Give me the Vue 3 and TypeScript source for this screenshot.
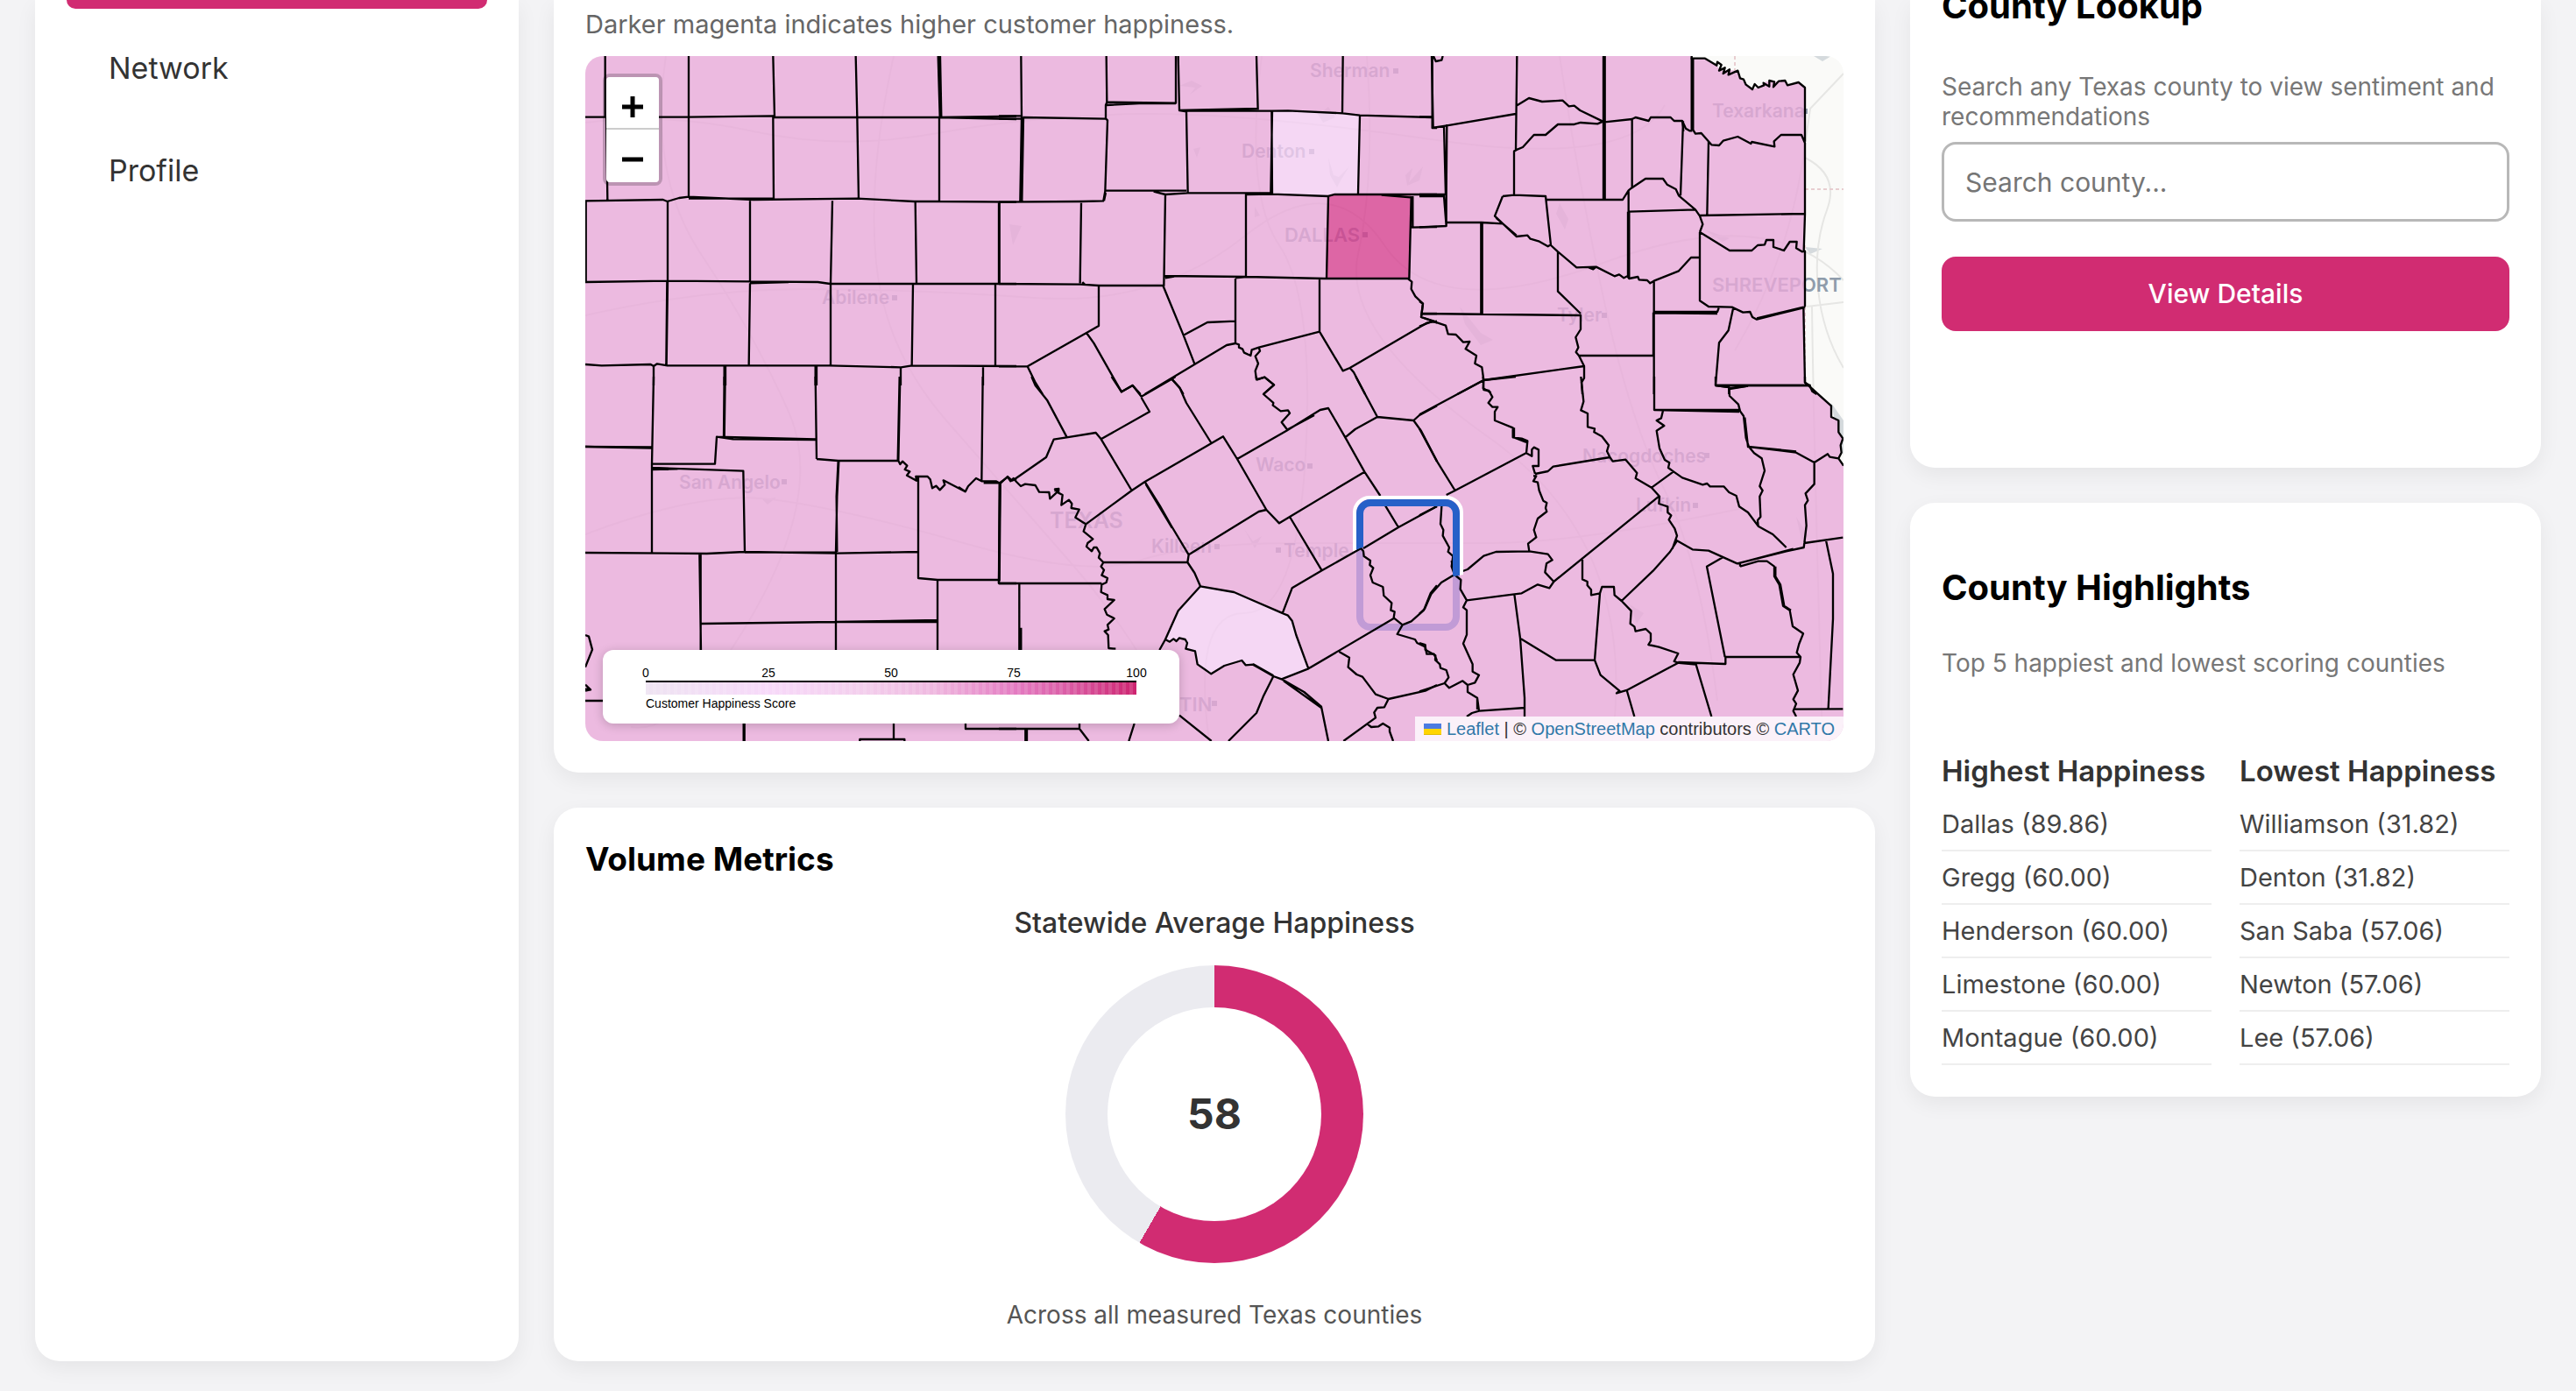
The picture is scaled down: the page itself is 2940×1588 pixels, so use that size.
<script setup lang="ts">
import { ref } from 'vue'

interface County {
  name: string
  score: string
}

interface Sheet {
  x: number
  y: number
  lines: string
}

interface Place {
  name: string
  x: number
  y: number
  size: number
  dot?: [number, number]
}

const query = ref('')
const average = 58

const highest: County[] = [
  { name: 'Dallas', score: '89.86' },
  { name: 'Gregg', score: '60.00' },
  { name: 'Henderson', score: '60.00' },
  { name: 'Limestone', score: '60.00' },
  { name: 'Montague', score: '60.00' },
]

const lowest: County[] = [
  { name: 'Williamson', score: '31.82' },
  { name: 'Denton', score: '31.82' },
  { name: 'San Saba', score: '57.06' },
  { name: 'Newton', score: '57.06' },
  { name: 'Lee', score: '57.06' },
]

const places: Place[] = [
  { name: 'Sherman', x: 1495, y: 88, size: 21, dot: [1590, 78] },
  { name: 'Texarkana', x: 1954, y: 134, size: 21, dot: [2057, 124] },
  { name: 'Denton', x: 1417, y: 180, size: 21, dot: [1494, 170] },
  { name: 'DALLAS', x: 1466, y: 276, size: 22, dot: [1555, 265] },
  { name: 'SHREVEPORT', x: 1954, y: 333, size: 22 },
  { name: 'Abilene', x: 938, y: 347, size: 21, dot: [1018, 337] },
  { name: 'Tyler', x: 1777, y: 367, size: 21, dot: [1828, 357] },
  { name: 'San Angelo', x: 775, y: 558, size: 21, dot: [892, 547] },
  { name: 'Waco', x: 1433, y: 538, size: 21, dot: [1492, 529] },
  { name: 'Nacogdoches', x: 1806, y: 528, size: 21, dot: [1945, 517] },
  { name: 'Lufkin', x: 1867, y: 584, size: 21, dot: [1932, 574] },
  { name: 'TEXAS', x: 1198, y: 603, size: 25 },
  { name: 'Killeen', x: 1314, y: 631, size: 21, dot: [1386, 621] },
  { name: 'Temple', x: 1465, y: 636, size: 21, dot: [1456, 625] },
  { name: 'AUSTIN', x: 1300, y: 812, size: 22, dot: [1383, 800] },
]

const stateShape =
  'M-2856 42H934V52H978L1018 74L1030 92L1060 90L1090 92L1098 118L1118 140L1140 156L1160 150L1185 130L1215 130L1252 126L1260 142L1298 132L1320 150V1160L1345 1182L1410 1240V1278L1435 1290V1330L1450 1352L1442 1375V1410L1435 1420L1456 1445V2388H-2856Z'
const dallas = 'M-312 522L-290 514L-30 520V524L-35 804L-318 802Z'
const denton = 'M-504 232L-450 228L-204 246L-210 512L-290 514L-312 522L-508 514Z'
const williamson =
  'M-750 1858L-635 1878L-470 1950L-450 1958L-436 1976L-422 2025L-380 2140L-472 2176L-500 2166L-570 2126L-595 2128L-608 2112L-668 2130L-713 2158L-760 2125L-768 2080L-800 2072L-802 2045L-822 2035L-840 2046L-870 2040L-826 1942Z'

const roads =
  'M668 140Q760 128 860 150T1070 152T1300 130T1640 160T1900 120M668 360Q800 330 920 330T1180 340T1420 270T1580 280T1830 300T2104 320M760 64Q740 200 800 290T900 470T860 700T720 830M1020 64Q990 200 1000 300T1080 480T1220 640T1330 800M1440 64Q1420 220 1460 280T1490 520T1420 700T1380 846M1560 64Q1570 200 1550 290T1700 500T1840 846M668 610Q800 560 880 570T1100 620T1300 640T1480 620T1700 620T1990 580M1780 64Q1800 200 1830 340T1900 560T1960 800M2060 180Q2100 200 2085 240T2075 330T2104 420M2104 84L2066 124L2058 180Q2040 300 1980 400M2062 350Q2104 345 2104 345M2080 846Q2070 500 2068 350'
const water =
  'M1360 92L1346 98L1364 100L1358 108L1372 98ZM1500 124L1510 140L1524 134L1516 122L1506 130ZM1516 180L1522 200L1528 202L1540 190L1530 206L1526 214L1518 200ZM1604 200L1612 192L1608 208L1624 190L1620 206L1606 212ZM1362 170L1370 168L1366 180ZM1152 256L1166 258L1156 280ZM1432 236L1438 246L1432 248ZM1780 232L1790 250L1786 262L1776 244ZM1666 350L1690 380L1704 388L1690 394L1672 370ZM1945 262L1974 272L1966 276ZM1420 604L1432 626L1440 612L1430 618ZM1860 690L1876 700L1868 712ZM2050 590L2064 612L2056 616ZM2060 282L2080 284L2066 290ZM2070 64H2090L2080 70ZM870 570L886 568L876 576Z'

const sheets: Sheet[] = [
  {
    x: 660,
    y: 0,
    lines:
      'M24 401H378L668 397V402H1236L1500 398M1236 402L1500 408M24 688L290 684L305 690L345 678L378 674L600 684L955 680L1150 690H1236L1500 692M378 680H668M92 192V400M96 400L100 685M378 192V676M667 192L672 400M667 400L669 680M950 192L955 402M955 402L960 684M1232 192L1238 400M1239 192L1243 400M1236 400V688M26 690V965M306 690V965M588 684V965M870 688L864 970M1154 690L1158 970M1440 692V970M24 966L306 962L588 964L820 966L862 972H1500M588 970L720 966M306 965L302 1250M588 970L584 1250M304 965L301 1250M864 972V1250M1146 972L1142 1255M1428 972V1254M24 1248L80 1252L248 1248L258 1254L270 1246L305 1252H860L1105 1258L1142 1252L1500 1254M258 1254V1320M500 1254V1320M504 1254V1320M812 1254V1320M816 1254V1320M1104 1258V1320M1386 1254V1320',
  },
  {
    x: 1140,
    y: 50,
    lines:
      'M76 42L78 250L73 540M84 252L79 540M0 247H78M0 257H78M82 252L368 257M368 42L370 200L366 210V256L372 262L364 505L358 538M368 200L606 203V42M368 210L480 204H606M614 42L618 228L642 232M616 228L885 222M882 42L887 226M642 230H936L990 229L1178 238L1236 245L1482 252M1178 42L1176 238M1482 42L1487 288H1500M642 232L647 510M936 232L931 512M934 232L936 514M1236 246L1230 512M366 503H642M366 510L360 538M530 506L570 516L646 511H930M848 516L936 515L1128 522L1150 516H1500M1310 518L1410 526M0 542L282 540L360 538M2 545V822M282 545L278 820M570 516L565 830M846 512V796M1128 522L1122 802M1412 522L1405 806M1417 522V628M1408 629L1500 627M0 822L280 824L342 828H562L632 998L670 1096M566 795L848 798L1115 804H1402M570 802L600 797M286 816L296 826M342 828V966L300 990L98 1105H0M98 1105L125 1160L150 1200M300 990L325 1025L420 1192L458 1170L485 1200M500 1200L670 1098L780 1032L810 1026L822 1030V1040L834 1045L840 1058L862 1068L866 1048L890 1040L1098 986M592 1148L618 1176L632 1200M632 998L714 954L810 950M810 804V1026M810 802L848 798M890 1040L894 1052L878 1070L888 1095L878 1120L882 1150L910 1142L942 1168L906 1200M1098 804V986L1178 1120L1202 1110L1465 956L1500 950M1202 1110L1215 1125L1254 1200M1402 806L1414 815L1412 840L1426 865L1452 890L1446 936L1490 950L1500 956M1446 924H1500',
  },
  {
    x: 1620,
    y: 50,
    lines:
      'M44 42V288L94 280L330 240M94 276L92 520V624M84 282L90 520M0 516H88M0 522H84L92 624L0 628M92 612H212L285 616M0 250H44M48 42L56 60L76 56L80 42M334 42L330 365L324 368V518M332 212L375 186L420 198L490 194L512 214L530 212L550 228L628 266M330 364L354 354L392 312H432L474 276H530L552 270L610 274L628 266M630 42V534M635 42V534M634 268L728 258L740 252L785 264L792 252H860L872 264H900L912 290L925 298H934M932 42V298M937 50V298M728 258V495M903 265L894 520M900 265L904 300M928 50H978L1018 74L1020 62L1034 72L1026 92L1046 82L1040 102L1062 88L1058 106L1090 92L1098 118L1110 122L1118 140L1140 156L1148 138L1160 150L1180 142L1178 134L1198 146L1198 126L1215 130L1212 148L1230 128L1252 126L1260 142L1298 132L1320 150V335M934 290L945 308L965 306L1000 346L1026 348L1040 332L1090 318L1135 342L1138 336L1216 352L1214 334L1238 312H1308L1320 340V585M990 335L985 586M960 588L1320 582M1320 585L1316 710M285 522L258 590L332 660L370 656L380 668L408 676L440 694L450 688M262 596L332 656M285 522L324 518L432 522L450 690M436 534H696L716 502L726 494L774 462H834L848 482L878 498L888 520L945 568L960 590L970 618L960 645M716 505V575L945 568M714 575V800M718 575V800M450 690L474 712L538 766L605 764L595 772L580 766M605 764L668 796L684 790L700 802L712 796L718 804L748 798L752 808L780 810L790 820L803 812L888 778L930 732H960M474 712V848L552 924M960 645L1062 708H1138L1158 690L1182 688L1188 672H1212V696L1248 708L1268 678H1292L1290 700L1310 712L1320 710V900M960 645V880L990 900L1070 902L1108 920L1132 918L1140 936L1155 944L1315 904L1320 900M1155 940L1315 902M803 812V1200M801 920V1066M805 918H1020L1025 905M805 922L1020 924M1075 902L1058 982L1026 1024L1014 1168M1014 1170H1336L1345 1190L1360 1200M1315 904L1320 1160L1336 1170M1060 1200V1180L1125 1172M1014 1170L1060 1176M211 612V924M215 612V924M5 924L552 930V978L535 1005L544 1040L536 1056L546 1068H803M0 882L12 890L6 936L45 950L90 965L98 994L125 996L150 1022L172 1020L158 1045L195 1068L190 1095L214 1108L220 1152L218 1180L245 1195M0 968L45 950M220 1152L130 1200M220 1152L564 1104L546 1068M564 1104V1145L555 1160L558 1200',
  },
  {
    x: 660,
    y: 430,
    lines:
      'M24 240L252 245M24 240L252 241M258 0L252 300V602M500 0L498 210M503 0L500 210M812 0L816 282M1102 0L1096 288M1100 0L1094 288M1385 0L1381 358M254 299H468L474 206L530 214L814 216M474 206L814 214M254 312L565 323L570 600M254 318L340 316M816 282L890 288L884 410L886 600M892 288L886 410L882 600M890 288H1096L1102 300L1110 290L1126 305L1118 318L1135 325L1125 338L1158 356L1156 342H1196L1205 352L1212 382L1225 374L1238 388L1255 370L1250 355L1325 394L1302 378M1325 394L1335 375L1362 348L1381 358H1430L1445 366L1470 342L1485 356L1500 350M1388 364H1440M1164 342V690L1230 696H1440M1442 366L1440 708H1500M1445 366L1442 700M24 603L440 606L570 600L886 605L1164 600M570 602H886M415 606L420 936M419 606V936M882 606V936M1230 696V936M422 846L882 840L1230 834M882 840H1230M24 885L36 890L48 935L24 995M24 1055L42 1072L24 1076M24 1070H42M24 1110H84M566 1188V1248M569 1188V1248M1080 1188V1242M964 1248V1242H1117V1248M1326 1188V1206H1500',
  },
  {
    x: 1140,
    y: 430,
    lines:
      'M112 0L125 30L165 80L232 206M386 0L420 52L458 30L488 68L592 8L605 0M488 72L516 120L350 214M592 8L620 40L642 90L726 225M50 354L162 276L188 215L232 208L332 192L350 214L455 390M298 505L455 390L500 360L768 205L816 282L916 456L960 502L996 480L1252 326M0 366L30 344L40 358L50 348L60 360L75 375L90 368L125 372L138 395L172 396L175 418L200 395L192 385L205 384L204 398L218 405L214 440L240 422L250 435L248 450L275 455L262 482L290 500L298 505L290 530L322 556L304 570L300 582L318 598L325 585H335L346 605L342 620L358 636H645M190 390H208M500 360L550 440L590 510L650 610L646 636L670 672L690 718M503 368L593 518M650 610L890 462L916 456M816 282L985 185L1100 114L1128 108L1186 208L1252 326L1306 408M985 183L1080 132M1322 440L1368 516M880 0L885 10L910 2L942 28L906 60L940 90L938 98L965 118L990 115L996 125L968 156L988 182M1222 0L1296 138L1220 180L1186 208M1296 138L1420 150L1440 132L1500 100M1420 150L1446 186L1500 290M996 480L1106 664M1248 588L1368 516L1500 444M972 808L1004 724L1106 664L1240 588L1248 598L1250 615L1272 630L1270 645L1282 655L1272 680L1280 705L1315 720L1318 750L1345 775L1342 800L1355 805L1352 826L1382 850L1364 882L1425 900L1432 912L1460 925L1465 950L1490 950L1500 972M1382 850L1412 838L1455 800L1478 742L1500 715M1060 1000L1352 828M690 718L805 738L970 810L990 818L1004 836L1018 885L1060 1000L968 1036L940 1026L870 986L845 988L832 972L772 990L727 1018L680 985L672 940L640 932L645 912L638 900L618 895L608 906L598 898L585 908L570 900L614 802ZM860 762L972 810M870 984L940 1024M550 936L570 900M358 636L350 650L360 662L352 680L372 690L368 705L352 712L350 738L372 748L372 762L395 765L362 796L370 815L395 828L372 850L376 866L362 872L374 885L376 930L400 932M0 708H352M70 708V936M76 860V936M4 366L0 708M940 1026L905 1096L882 1152L786 1248M968 1036L1045 1080L1104 1130L1128 1248M975 1042L1104 1134M1165 942L1200 962L1196 995L1225 1020L1245 1028L1290 1088L1334 1104L1460 1076L1500 1056M1334 1104L1320 1132L1296 1134L1285 1150L1290 1168L1180 1248M1262 1190L1275 1200L1300 1198L1315 1188L1338 1202V1215L1350 1248M618 1160L728 1248M464 1188L445 1248M0 1206H276V1188M276 1206L308 1248M91 1206V1248M96 1206V1248',
  },
  {
    x: 1620,
    y: 430,
    lines:
      'M0 130L220 12L330 0M218 0L220 45L238 48L250 70L236 90L250 104H268L258 120V150L320 175V208L350 212L370 220L366 262L385 272V250L392 242L408 250V306H388L396 333M324 175V208L366 225M0 178L60 290L122 390M92 405L122 390L365 262M0 475L60 444M76 444L72 505L82 525L80 545L102 585L98 600L115 615L110 650L120 678M110 630L114 655M396 333L440 324L458 308L652 276M390 340H400L390 358L405 362L410 390L424 425L436 432L432 450L436 462L405 486L392 525L400 550L372 572L376 598M120 676L165 660L220 614L262 600L376 598L440 608L455 628L435 640L430 670L460 702L820 410M460 702L445 724L405 712L350 742L325 745L162 766L140 728L142 696L120 678L75 705L40 745L18 795L0 812M162 766L150 790L162 800V884L150 914L182 985V1010L204 1022L190 1048L165 1056V1080L198 1100L204 1145L362 1134M198 1100V1140M204 1145L180 1152L162 1164M0 912L20 918V935L55 955L54 970L70 985L72 998L92 1005L100 1030L86 1050L0 1078M86 1050L102 1066L148 1042L165 1056M325 745L345 896L360 1100V1164M345 896L468 971H600L618 742M558 620V694L575 702V715L588 730V748L618 742L625 720H666L668 748L692 768L725 802L722 846L736 856L740 872L775 864L792 880V905L784 918L820 926L886 948L872 975L886 980L710 1074L675 1084L685 1076L620 1022L600 971M692 768L800 665L858 600L882 562L935 592L990 596L1088 640L1256 598L1316 585L1318 570L1450 551M1098 650V638L1280 590M710 1074L736 1164M886 978L1048 984V960H1305M880 980L947 986L1000 1164M1040 618L984 650L1046 960M1098 650L1160 632H1190L1215 650V684L1232 712L1245 785L1268 800L1278 855L1314 880L1300 915L1292 945L1305 960L1302 980L1280 1020L1296 1075L1280 1105L1290 1120L1280 1145L1290 1164M1219 650V684L1236 712L1249 785L1272 800M1284 1139L1450 1138M1392 560L1416 675V830L1400 1136M553 0L562 85L553 115L576 126V172L600 178L598 190L625 205L648 235L642 255L652 276L662 290L706 284L745 330L740 348L795 380L870 325M795 380L822 410L820 435L850 445V465L862 475L854 490L874 520L882 545L866 590M804 0V114L1095 120M804 114H1095M834 116L828 142L812 150L838 168L812 185L822 245L840 285L856 295L852 312L870 325L900 346L970 370L985 366L995 376L1042 376L1060 396L1085 408L1095 445L1125 465L1160 512L1210 540L1256 585M1014 0V30H1340M1014 30L1060 36L1062 66L1092 95L1098 118L1110 135L1118 210L1128 240L1290 260L1352 294L1398 265L1405 275L1435 280L1452 305M1062 42L1125 32M1114 140L1125 240L1290 256M1128 240L1146 262L1172 280L1182 322L1165 375L1175 390L1165 410L1168 480L1158 492L1160 512M1352 294V368L1322 400L1330 424L1320 440L1325 510L1318 570M1320 0V20L1345 42L1410 100V138L1435 150V190L1450 212L1442 235L1445 260L1435 280',
  },
]

const ticks = [0, 25, 50, 75, 100]
</script>

<template>
  <div class="page">
    <nav class="card sidebar">
      <a href="#" class="nav-item active" aria-current="page"></a>
      <a href="#network" class="nav-item">Network</a>
      <a href="#profile" class="nav-item">Profile</a>
    </nav>

    <main class="column">
      <section class="card map-card">
        <p class="map-note">Darker magenta indicates higher customer happiness.</p>
        <div class="map">
          <svg class="map-canvas" viewBox="668 64 1436 782" preserveAspectRatio="xMidYMid slice">
            <defs>
              <clipPath id="marker-top">
                <path d="M1530 550H1690V652L1660 658L1620 640L1580 616L1552 626L1540 631Z" />
              </clipPath>
            </defs>
            <path class="water" :d="water" />
            <path class="roads" :d="roads" />
            <path class="state-line" d="M1980 64V88M2060 216H2104M2060 280V430" />
            <path class="lake" d="M2090 460L2104 480V520L2096 490Z" />
            <g class="places">
              <template v-for="place in places" :key="place.name">
                <text :x="place.x" :y="place.y" :font-size="place.size">{{ place.name }}</text>
                <rect v-if="place.dot" :x="place.dot[0]" :y="place.dot[1]" width="6" height="6" />
              </template>
            </g>
            <rect class="marker" x="1552" y="574" width="110" height="142" rx="12" />
            <g class="fills" transform="translate(1620 50) scale(0.33333)">
              <path class="state" fill-rule="evenodd" :d="stateShape + dallas + denton + williamson" />
              <path class="high" :d="dallas" />
              <path class="low" :d="denton + williamson" />
            </g>
            <g
              v-for="sheet in sheets"
              :key="`${sheet.x}-${sheet.y}`"
              :transform="`translate(${sheet.x} ${sheet.y}) scale(0.33333)`"
            >
              <path class="borders" :d="sheet.lines" />
            </g>
            <g clip-path="url(#marker-top)">
              <rect class="marker-halo" x="1546" y="568" width="122" height="154" rx="17" />
              <rect class="marker" x="1552" y="574" width="110" height="142" rx="12" />
            </g>
          </svg>

          <div class="zoom">
            <button type="button" aria-label="+">
              <svg viewBox="0 0 24 24" width="24" height="24"><path d="M0 12H24M12 0V24" /></svg>
            </button>
            <button type="button" aria-label="−">
              <svg viewBox="0 0 24 24" width="24" height="24"><path d="M0 12H24" /></svg>
            </button>
          </div>

          <div class="legend">
            <div class="legend-ticks">
              <span v-for="tick in ticks" :key="tick">{{ tick }}</span>
            </div>
            <div class="legend-bar"></div>
            <div class="legend-title">Customer Happiness Score</div>
          </div>

          <div class="attribution">
            <svg class="flag" viewBox="0 0 20 13" width="20" height="13">
              <path fill="#4c7be1" d="M0 0h20v7H0z" />
              <path fill="#ffd500" d="M0 6h20v6H0z" />
              <path fill="#e0bc00" d="M0 12h20v1H0z" />
            </svg>
            <a href="#leaflet">Leaflet</a> | © <a href="#osm">OpenStreetMap</a> contributors ©
            <a href="#carto">CARTO</a>
          </div>
        </div>
      </section>

      <section class="card volume">
        <h2>Volume Metrics</h2>
        <h3>Statewide Average Happiness</h3>
        <div class="donut" :style="{ '--share': average + '.4%' }">
          <div class="donut-hole">{{ average }}</div>
        </div>
        <p>Across all measured Texas counties</p>
      </section>
    </main>

    <aside class="column">
      <section class="card lookup">
        <h2>County Lookup</h2>
        <label for="county">Search any Texas county to view sentiment and recommendations</label>
        <input id="county" v-model="query" type="text" placeholder="Search county..." />
        <button type="button">View Details</button>
      </section>

      <section class="card highlights">
        <h2>County Highlights</h2>
        <p>Top 5 happiest and lowest scoring counties</p>
        <div class="rankings">
          <div>
            <h3>Highest Happiness</h3>
            <ul>
              <li v-for="county in highest" :key="county.name">{{ county.name }} ({{ county.score }})</li>
            </ul>
          </div>
          <div>
            <h3>Lowest Happiness</h3>
            <ul>
              <li v-for="county in lowest" :key="county.name">{{ county.name }} ({{ county.score }})</li>
            </ul>
          </div>
        </div>
      </section>
    </aside>
  </div>
</template>

<style>
body {
  background: #f3f3f5;
}
</style>

<style scoped>
.page {
  display: grid;
  grid-template-columns: 552px minmax(0, 1fr) 720px;
  gap: 40px;
  padding: 0 40px 34px;
  font-family: Inter, 'Liberation Sans', sans-serif;
  color: #333;
}

.page * {
  box-sizing: border-box;
}

h2,
h3,
p,
ul {
  margin: 0;
  padding: 0;
}

h2 {
  font-size: 40px;
  line-height: 46px;
  font-weight: 700;
  color: #000;
}

.card {
  background: #fff;
  border-radius: 28px;
  padding: 36px;
  box-shadow: 0 8px 24px rgba(0, 0, 0, 0.06);
}

.column {
  display: flex;
  flex-direction: column;
  gap: 40px;
}

.sidebar,
.map-card,
.lookup {
  padding-top: 0;
  border-top-left-radius: 0;
  border-top-right-radius: 0;
}

.sidebar {
  display: flex;
  flex-direction: column;
  gap: 18px;
}

.nav-item {
  height: 99px;
  line-height: 99px;
  padding: 0 48px;
  font-size: 34px;
  color: #333;
  text-decoration: none;
}

.nav-item.active {
  height: 10px;
  background: #d12c72;
  border-radius: 0 0 16px 16px;
}

.map-note {
  font-size: 29px;
  line-height: 56px;
  margin-bottom: 8px;
  color: #666;
}

.map {
  position: relative;
  height: 782px;
  border-radius: 20px;
  overflow: hidden;
  background: #fafaf8;
}

.map-canvas {
  display: block;
  width: 100%;
  height: 100%;
}

.roads {
  fill: none;
  stroke: #e6e6e4;
  stroke-width: 2;
}

.water,
.lake {
  fill: #d5dadd;
}

.state-line {
  fill: none;
  stroke: #e8cdd0;
  stroke-width: 2;
  stroke-dasharray: 4 3;
}

.places {
  fill: #8f9cab;
  font-weight: 600;
}

.state {
  fill: #e9aada;
  fill-opacity: 0.8;
}

.high {
  fill: #d64190;
  fill-opacity: 0.8;
}

.low {
  fill: #f4cef2;
  fill-opacity: 0.8;
}

.borders {
  fill: none;
  stroke: #000;
  stroke-width: 7;
  stroke-linejoin: round;
}

.marker {
  fill: none;
  stroke: #2660c8;
  stroke-width: 8;
}

.marker-halo {
  fill: none;
  stroke: #fff;
  stroke-width: 4;
}

.zoom {
  position: absolute;
  top: 20px;
  left: 20px;
  width: 68px;
  border: 4px solid rgba(0, 0, 0, 0.2);
  border-radius: 8px;
  background-clip: padding-box;
}

.zoom button {
  display: flex;
  align-items: center;
  justify-content: center;
  width: 60px;
  height: 60px;
  padding: 8px 0 0;
  border: 0;
  background: #fff;
  border-radius: 0 0 4px 4px;
}

.zoom button:first-child {
  padding-top: 10px;
  border-bottom: 2px solid #ccc;
  border-radius: 4px 4px 0 0;
}

.zoom path {
  stroke: #000;
  stroke-width: 5;
}

.legend {
  position: absolute;
  left: 20px;
  bottom: 20px;
  width: 658px;
  height: 84px;
  padding: 22px 49px 0;
  background: #fff;
  border-radius: 12px;
  box-shadow: 0 2px 12px rgba(0, 0, 0, 0.2);
  font: 14px/16px 'Liberation Sans', sans-serif;
  color: #000;
}

.legend-ticks {
  display: flex;
  justify-content: space-between;
  margin: 0 -20px;
  padding-bottom: 5px;
  line-height: 8px;
}

.legend-ticks span {
  width: 40px;
  text-align: center;
}

.legend-bar {
  height: 16px;
  border-top: 2px solid #000;
  background:
    repeating-linear-gradient(90deg, rgba(255, 255, 255, 0.12) 0 4px, transparent 4px 8px),
    linear-gradient(
      90deg,
      #eee3f2 0%,
      #f7d9f9 25%,
      #f3cdec 45%,
      #efb9e0 58%,
      #e47cc2 75%,
      #db5fa8 85%,
      #cd2470 100%
    );
}

.legend-title {
  margin-top: 2px;
}

.attribution {
  position: absolute;
  right: 0;
  bottom: 0;
  padding: 0 10px;
  background: rgba(255, 255, 255, 0.8);
  font: 20px/28px 'Liberation Sans', sans-serif;
  color: #333;
  white-space: nowrap;
}

.flag {
  margin-right: 6px;
}

.attribution a {
  color: #3078a8;
  text-decoration: none;
}

.volume {
  display: flex;
  flex-direction: column;
}

.volume h2 {
  font-size: 37px;
}

.volume h3 {
  margin-top: 28px;
  text-align: center;
  font-size: 32px;
  line-height: 44px;
  font-weight: 500;
}

.donut {
  display: flex;
  align-items: center;
  justify-content: center;
  width: 340px;
  height: 340px;
  margin: 26px auto 42px;
  border-radius: 50%;
  background: conic-gradient(#d12c72 var(--share), #ebebf0 0);
}

.donut-hole {
  width: 244px;
  line-height: 244px;
  border-radius: 50%;
  background: #fff;
  text-align: center;
  font-size: 48px;
  font-weight: 700;
}

.volume p {
  text-align: center;
  font-size: 28px;
  line-height: 34px;
  color: #555;
}

.lookup {
  display: flex;
  flex-direction: column;
  padding-bottom: 156px;
}

.lookup h2 {
  line-height: 14px;
}

.lookup label {
  margin: 68px 0 12px;
  font-size: 28px;
  line-height: 34px;
  color: #777;
}

.lookup input {
  width: 100%;
  height: 91px;
  padding: 0 24px;
  border: 3px solid #b8b8b8;
  border-radius: 16px;
  background: #fff;
  font: inherit;
  font-size: 30px;
  color: #333;
}

.lookup input::placeholder {
  color: #757575;
  opacity: 1;
}

.lookup button {
  height: 85px;
  margin-top: 40px;
  padding: 0 0 2px;
  border: 0;
  border-radius: 16px;
  background: #d12c72;
  color: #fff;
  font: inherit;
  font-size: 30px;
  font-weight: 500;
}

.highlights {
  padding-top: 74px;
}

.highlights p {
  margin: 46px 0 86px;
  font-size: 28px;
  line-height: 34px;
  color: #777;
}

.rankings {
  display: grid;
  grid-template-columns: 1fr 1fr;
  gap: 32px;
}

.rankings h3 {
  margin-bottom: 11px;
  font-size: 33px;
  line-height: 40px;
  font-weight: 600;
  white-space: nowrap;
}

.rankings ul {
  list-style: none;
}

.rankings li {
  font-size: 29px;
  line-height: 59px;
  border-bottom: 2px solid #eee;
  color: #444;
}
</style>
